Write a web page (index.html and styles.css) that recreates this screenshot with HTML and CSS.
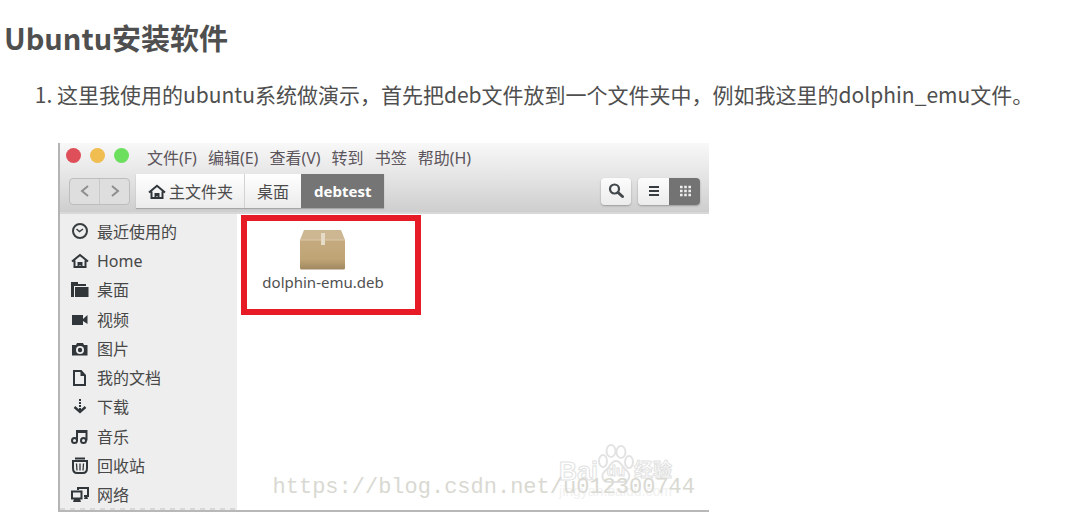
FILE: index.html
```html
<!DOCTYPE html>
<html lang="zh-CN">
<head>
<meta charset="utf-8">
<title>Ubuntu安装软件</title>
<link rel="stylesheet" href="styles.css">
</head>
<body>
<main class="article">
  <h1 class="title">Ubuntu安装软件</h1>
  <ol class="steps">
    <li>
      <p class="step-text">这里我使用的ubuntu系统做演示，首先把deb文件放到一个文件夹中，例如我这里的dolphin_emu文件。</p>
      <section class="window" aria-label="debtest">
        <header class="header">
          <div class="menubar">
            <div class="lights">
              <button class="light red" aria-label="关闭"></button>
              <button class="light yellow" aria-label="最小化"></button>
              <button class="light green" aria-label="最大化"></button>
            </div>
            <nav class="menus">
              <button>文件(F)</button>
              <button>编辑(E)</button>
              <button>查看(V)</button>
              <button>转到</button>
              <button>书签</button>
              <button>帮助(H)</button>
            </nav>
          </div>
          <div class="toolbar">
            <div class="history">
              <button aria-label="后退"><svg width="12" height="14" viewBox="0 0 12 14"><path d="M9 2 3 7l6 5" fill="none" stroke="#8e8e8e" stroke-width="2"/></svg></button>
              <button aria-label="前进"><svg width="12" height="14" viewBox="0 0 12 14"><path d="m3 2 6 5-6 5" fill="none" stroke="#8e8e8e" stroke-width="2"/></svg></button>
            </div>
            <div class="crumbs">
              <button class="crumb home"><svg width="18" height="16" viewBox="0 0 18 16"><path d="M1 8.500 9 1.800l8 6.700M3.500 7.500V14h11V7.500" fill="none" stroke="#30363a" stroke-width="2"/><path d="M6.500 14V9h5v5h-2v-2h-1v2z" fill="#30363a"/></svg>主文件夹</button>
              <button class="crumb">桌面</button>
              <button class="crumb current">debtest</button>
            </div>
            <div class="tools">
              <button class="tool search" aria-label="搜索"><svg width="18" height="18" viewBox="0 0 18 18"><circle cx="7.500" cy="7" r="4.500" fill="none" stroke="#41474b" stroke-width="2.200"/><path d="m11 10.500 4.500 4" stroke="#41474b" stroke-width="3" stroke-linecap="round"/></svg></button>
              <div class="views">
                <button class="tool" aria-label="列表"><svg width="14" height="14" viewBox="0 0 14 14"><path d="M2 3h10M2 7h10M2 11h10" stroke="#363c40" stroke-width="2"/></svg></button>
                <button class="tool active" aria-label="图标"><svg width="14" height="14" viewBox="0 0 14 14"><path d="M2 3h11M2 7h11M2 11h11" stroke="#eee" stroke-width="2.400" stroke-dasharray="2.600 1.600"/></svg></button>
              </div>
            </div>
          </div>
        </header>
        <div class="content">
          <nav class="sidebar">
            <a href="#recent"><svg class="icon" viewBox="0 0 18 18"><circle cx="9" cy="8" r="7" fill="none" stroke="#383e40" stroke-width="2"/><path d="m5.500 6 3 2.500L12 6" fill="none" stroke="#383e40" stroke-width="1.500"/></svg>最近使用的</a>
            <a href="#home"><svg class="icon" viewBox="0 0 18 18"><path d="M1 9.500 9 3l8 6.500M3.500 8.500V15h11V8.500" fill="none" stroke="#30363a" stroke-width="2"/><path d="M6.500 15v-5h5v5h-2v-2h-1v2z" fill="#30363a"/></svg>Home</a>
            <a href="#desktop"><svg class="icon" viewBox="0 0 18 18"><path d="M0 1h7v2h8v2H3v11H0z" fill="#30363a"/><path d="M4 6h13.500v10H4z" fill="#30363a"/></svg>桌面</a>
            <a href="#video"><svg class="icon" viewBox="0 0 18 18"><path d="M1 4h11v10H1zM12 8l4.500-4v9L12 10z" fill="#30363a"/></svg>视频</a>
            <a href="#pictures"><svg class="icon" viewBox="0 0 18 18"><path fill-rule="evenodd" d="M1 5h4l1-2h6l1 2h3.500v10.500H1zM9 6a4 4 0 1 0 0 8 4 4 0 0 0 0-8z" fill="#30363a"/><circle cx="9" cy="10" r="2.200" fill="#30363a"/></svg>图片</a>
            <a href="#documents"><svg class="icon" viewBox="0 0 18 18"><path d="M3 2h7l4 4.500V16H3z" fill="none" stroke="#30363a" stroke-width="2"/><path d="M9.500 2v5H14" fill="#30363a"/></svg>我的文档</a>
            <a href="#downloads"><svg class="icon" viewBox="0 0 18 18"><path d="M9 1v11" stroke="#30363a" stroke-width="2" stroke-dasharray="2 1"/><path d="m3.500 9 5.500 5 5.500-5" fill="none" stroke="#30363a" stroke-width="2.400"/></svg>下载</a>
            <a href="#music"><svg class="icon" viewBox="0 0 18 18"><g fill="none" stroke="#30363a" stroke-width="2"><circle cx="3.500" cy="12.500" r="2.500"/><circle cx="12.500" cy="12.500" r="2.500"/><path d="M6 13V3h9.500v9.500"/></g><path d="M6 2h10v3H6z" fill="#30363a"/></svg>音乐</a>
            <a href="#trash"><svg class="icon" viewBox="0 0 18 18"><g fill="none" stroke="#30363a"><path d="M4 1.500h10M1 4h16" stroke-width="2"/><path d="M2 4v7q0 5 4 5h6q4 0 4-5V4" stroke-width="2"/><path d="m5.500 6.500.5 7M9 6.500v7M12.500 6.500l-.5 7" stroke-width="1.300"/></g></svg>回收站</a>
            <a href="#network"><svg class="icon" viewBox="0 0 18 18"><g fill="none" stroke="#30363a" stroke-width="2"><path d="M7 4V2h10v8h-4"/><path d="M1 5.500h9.500v7H1z"/></g><path d="M3 13h6l1 3H2zM14 10h2l1 3h-4z" fill="#30363a"/></svg>网络</a>
          </nav>
          <div class="files">
            <a class="file" href="#dolphin-emu">
              <svg class="package" viewBox="0 0 48 42">
                <defs><linearGradient id="side" x2="0" y2="1"><stop offset="0" stop-color="#c4aa7f"/><stop offset=".65" stop-color="#bfa575"/><stop offset="1" stop-color="#a18760"/></linearGradient></defs>
                <path d="M5 1h37l4 10H1z" fill="#cdb793"/><path d="M1 11h45v28q0 1.500-1.500 1.500h-42Q1 40.500 1 39z" fill="url(#side)"/><path d="M1 11h45" stroke="#dbc9a9"/><path d="M22 4h4v12h-4z" fill="#e6dbc6"/>
              </svg>
              <span>dolphin-emu.deb</span>
            </a>
          </div>
        </div>
        <div class="baidu">
          <div class="logo"><span>Bai</span><span class="paw"><svg viewBox="0 0 36 40"><g fill="#fff" stroke="#e3e3e3" stroke-width="2"><ellipse cx="5" cy="17" rx="4" ry="6"/><ellipse cx="13" cy="7" rx="4.500" ry="6"/><ellipse cx="23" cy="8" rx="4.500" ry="6"/><ellipse cx="31" cy="18" rx="4" ry="6"/><path d="M18 17c5 0 6 6 10 9 6 5 3 12-3 12H11c-7 0-9-7-3-12 4-3 5-9 10-9z"/></g></svg><small>du</small></span><span class="exp">经验</span></div>
          <div class="domain">jingyan.baidu.com</div>
        </div>
        <div class="watermark">https://blog.csdn.net/u012300744</div>
      </section>
    </li>
  </ol>
</main>
</body>
</html>
```
FILE: styles.css
```css
* { box-sizing: border-box; }
body {
  margin: 0;
  background: #fff;
  color: #4f4f4f;
  font-family: "Noto Sans CJK SC", sans-serif;
}
button {
  margin: 0;
  padding: 0;
  border: 0;
  background: none;
  color: inherit;
  font: inherit;
}
svg { display: block; flex: none; }
.article { padding: 17px 4px 0; }
.title { margin: 0; font-size: 29px; line-height: 40px; font-weight: 700; }
.steps { margin: 21px 0 0; padding-left: 53px; font-size: 21px; line-height: 32px; }
.step-text { margin: 0; }
.window {
  position: relative;
  max-width: 651px;
  margin: 33px 0 0 1px;
  border-left: 2px solid #b4b4b4;
  border-bottom: 2px solid #b8b8b8;
  color: #4c4c4c;
  font: 16px/24px "Noto Sans", "Noto Sans CJK SC", sans-serif;
}
.header {
  height: 71px;
  border-bottom: 2px solid #d8d8d8;
  background: linear-gradient(#f8f8f8, #e4e4e4 50%, #cecece);
}
.menubar { display: flex; gap: 18px; padding: 3px 0 0 6px; }
.lights { display: flex; gap: 9px; padding-top: 2px; }
.light { width: 15px; height: 15px; border-radius: 50%; }
.red { background: #df4f5a; }
.yellow { background: #f0bd50; }
.green { background: #6ce05e; }
.menus { display: flex; gap: 11px; color: #5c555c; }
.toolbar { display: flex; align-items: center; padding: 4px 9px 0 9px; }
.history { display: flex; height: 27px; border: 1px solid #bdbdbd; border-radius: 4px; background: #dedede; }
.history button { display: grid; place-items: center; width: 29px; }
.history button + button { width: 30px; border-left: 1px solid #c8c8c8; }
.crumbs { display: flex; height: 34px; margin-left: 6px; box-shadow: 0 1px 1px #a6a6a6; }
.crumb { display: flex; align-items: center; padding: 2px 12px 0; background: linear-gradient(#fff, #ebebeb); }
.crumb.home { gap: 3px; padding-right: 11px; }
.crumb + .crumb { border-left: 1px solid #d2d2d2; }
.crumb.current { padding: 0 13px; border-left: 0; background: #757575; color: #fff; font-size: 15px; font-weight: 700; }
.tools { display: flex; gap: 7px; margin-left: auto; }
.tool { display: grid; place-items: center; width: 30px; height: 27px; background: linear-gradient(#fcfcfc, #ececec); }
.search, .views { border-radius: 4px; box-shadow: 0 1px 2px #999; }
.views { display: flex; overflow: hidden; }
.views .tool { width: 31px; }
.views .active { background: #737373; }
.content { display: flex; }
.sidebar {
  display: grid;
  grid-auto-rows: 1fr;
  flex: none;
  width: 177px;
  min-height: 296px;
  padding: 3px 0 0 11px;
  background: repeating-linear-gradient(90deg, #d8d8d8 0 5px, #eee 5px 10px) bottom / 100% 2px no-repeat #eee;
}
.sidebar a { display: flex; align-items: center; gap: 8px; color: #484848; text-decoration: none; }
.icon { width: 18px; height: 18px; }
.files { flex: 1; padding: 1px 4px; }
.file {
  display: flex;
  flex-direction: column;
  align-items: center;
  width: 180px;
  height: 100px;
  padding: 8px 16px 0 0;
  border: 6px solid #e61b25;
  color: #505050;
  font-size: 15px;
  line-height: 22px;
  text-decoration: none;
}
.package { width: 48px; height: 42px; }
.baidu { position: absolute; right: 37px; bottom: 12px; color: #fff; }
.logo {
  display: flex;
  align-items: flex-end;
  font: 700 25px/26px "Liberation Sans", "Noto Sans CJK SC", sans-serif;
  -webkit-text-stroke: 1px #e2e2e2;
}
.paw { position: relative; width: 36px; }
.paw small { position: absolute; inset: auto 0 5px; font-size: 15px; line-height: 16px; text-align: center; }
.exp { font-size: 19px; }
.domain { color: #f1f1f1; font: 14px/14px "Liberation Sans", sans-serif; }
.watermark {
  position: absolute;
  right: 14px;
  bottom: 9px;
  color: #d9d9d2;
  font: 22px/26px "Liberation Mono", monospace;
}
```
